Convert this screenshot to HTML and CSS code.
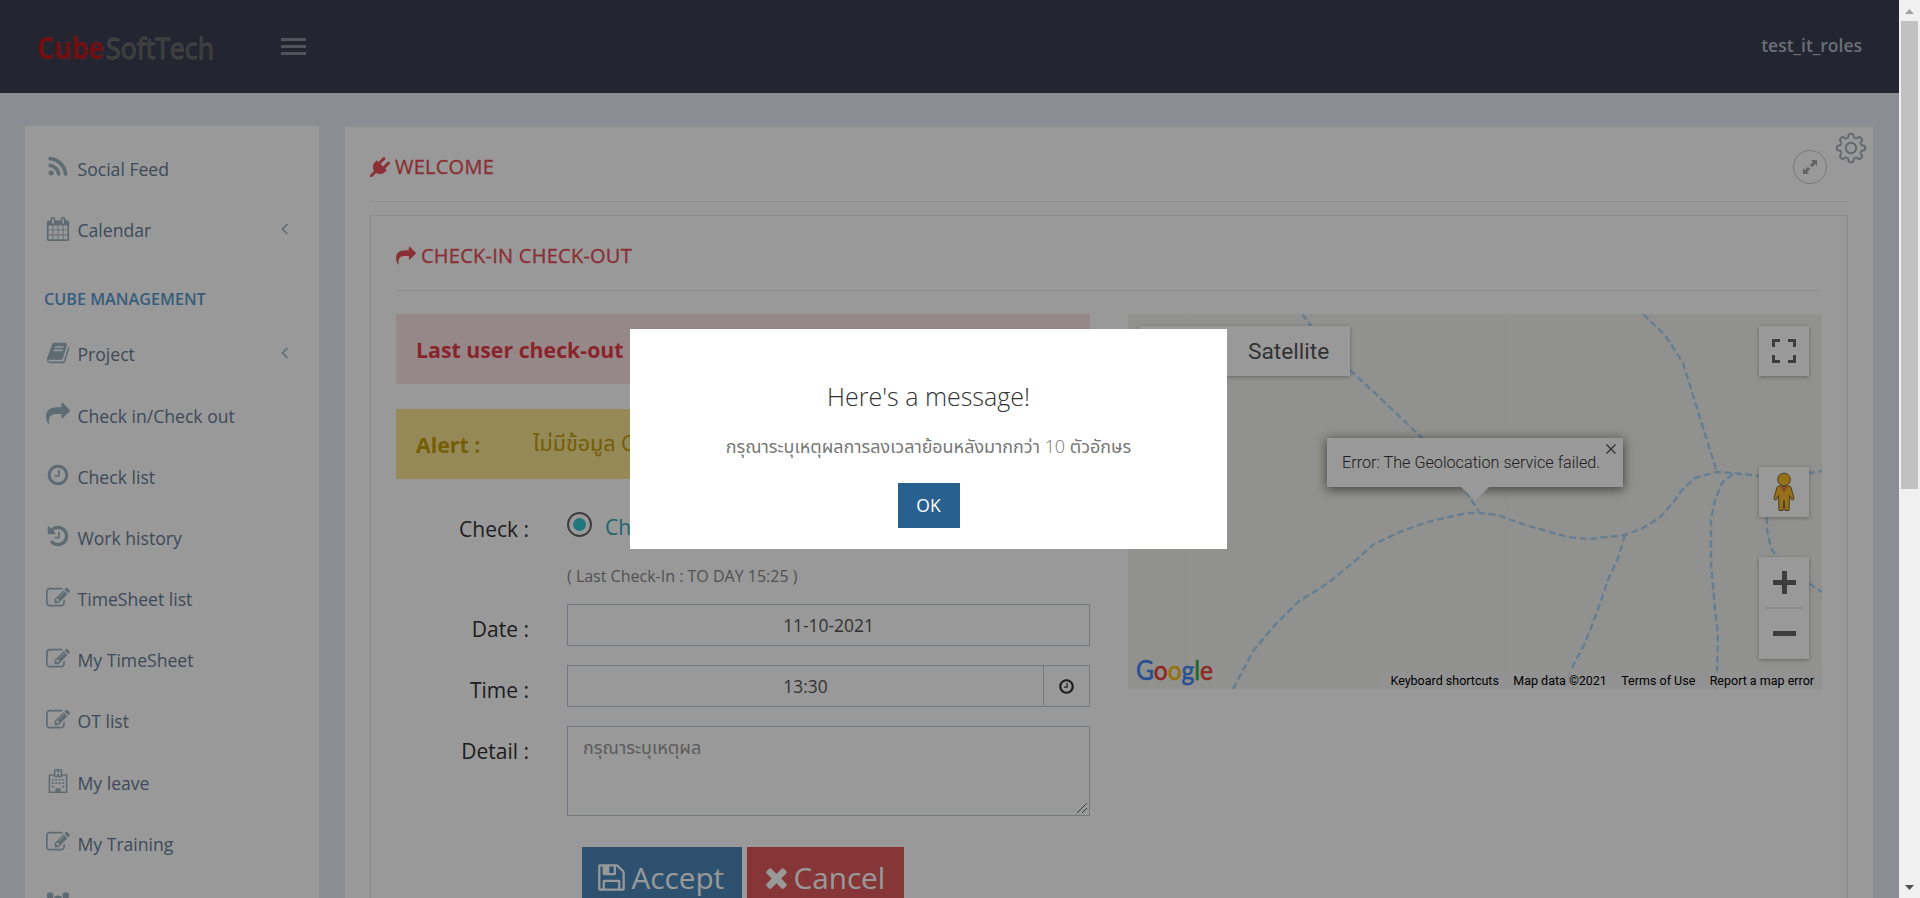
FILE: index.html
```html
<!DOCTYPE html>
<html lang="th">
<head>
<meta charset="utf-8">
<title>CubeSoftTech</title>
<link rel="stylesheet" href="styles.css">
</head>
<body>
<svg class="sprite" aria-hidden="true">
  <symbol id="rss" viewBox="0 0 1792 1792"><path d="M576 1344q0 80-56 136t-136 56-136-56-56-136 56-136 136-56 136 56 56 136zm512 123q2 28-17 48-18 21-47 21h-135q-25 0-43-16.500t-20-41.500q-22-229-184.500-391.500t-391.500-184.500q-25-2-41.500-20t-16.500-43v-135q0-29 21-47 17-17 43-17h5q160 13 306 80.500t259 181.500q114 113 181.500 259t80.500 306zm512 2q2 27-18 47-18 20-46 20h-143q-26 0-44.500-17.500t-19.500-42.500q-12-215-101-408.500t-231.500-336-336-231.500-408.500-102q-25-1-42.500-19.500t-17.500-43.500v-143q0-28 20-46 18-18 44-18h3q262 13 501.500 120t425.500 294q187 186 294 425.500t120 501.500z"/></symbol>
  <symbol id="calendar" viewBox="0 0 1792 1792"><path d="M192 1664h288v-288h-288v288zm352 0h320v-288h-320v288zm-352-352h288v-320h-288v320zm352 0h320v-320h-320v320zm-352-384h288v-288h-288v288zm736 736h320v-288h-320v288zm-384-736h320v-288h-320v288zm768 736h288v-288h-288v288zm-384-352h320v-320h-320v320zm-352-864v-288q0-13-9.500-22.500t-22.500-9.500h-64q-13 0-22.500 9.500t-9.500 22.500v288q0 13 9.500 22.500t22.500 9.500h64q13 0 22.500-9.500t9.500-22.500zm736 864h288v-320h-288v320zm-384-384h320v-288h-320v288zm384 0h288v-288h-288v288zm32-480v-288q0-13-9.500-22.500t-22.500-9.500h-64q-13 0-22.500 9.500t-9.500 22.500v288q0 13 9.500 22.500t22.500 9.500h64q13 0 22.500-9.500t9.500-22.500zm384-64v1280q0 52-38 90t-90 38h-1408q-52 0-90-38t-38-90v-1280q0-52 38-90t90-38h128v-96q0-66 47-113t113-47h64q66 0 113 47t47 113v96h384v-96q0-66 47-113t113-47h64q66 0 113 47t47 113v96h128q52 0 90 38t38 90z"/></symbol>
  <symbol id="book" viewBox="0 0 1792 1792"><path d="M1703 478q40 57 18 129l-275 906q-19 64-76.500 107.500t-122.500 43.500h-923q-77 0-148.500-53.500t-99.500-131.500q-24-67-2-127 0-4 3-27t4-37q1-8-3-21.500t-3-19.500q2-11 8-21t16.500-23.500 16.500-23.500q23-38 45-91.500t30-91.500q3-10 .5-30t-.5-28q3-11 17-28t17-23q21-36 42-92t25-90q1-9-2.500-32t.5-28q4-13 22-30.500t22-22.500q19-26 42.500-84.500t27.500-96.500q1-8-3-25.500t-2-26.500q2-8 9-18t18-23 17-21q8-12 16.500-30.500t15-35 16-36 19.500-32 26.500-23.500 36-11.500 47.500 5.500l-1 3q38-9 51-9h761q74 0 114 56t18 130l-274 906q-36 119-71.500 153.500t-128.500 34.500h-869q-27 0-38 15-11 16-1 43 24 70 144 70h923q29 0 56-15.500t35-41.500l300-987q7-22 5-57 38 15 59 43zm-1064 2q-4 13 2 22.500t20 9.500h608q13 0 25.500-9.500t16.500-22.500l21-64q4-13-2-22.500t-20-9.500h-608q-13 0-25.500 9.500t-16.500 22.500zm-83 256q-4 13 2 22.500t20 9.500h608q13 0 25.500-9.500t16.500-22.500l21-64q4-13-2-22.500t-20-9.500h-608q-13 0-25.500 9.500t-16.500 22.500z"/></symbol>
  <symbol id="share" viewBox="0 0 1792 1792"><path d="M1792 640q0 26-19 45l-512 512q-19 19-45 19t-45-19-19-45v-256h-224q-98 0-175.500 6t-154 21.500-133 42.500-105.500 69.500-80 101-48.500 138.500-17.500 181q0 55 5 123 0 6 2.500 23.500t2.500 26.500q0 15-8.500 25t-23.500 10q-16 0-28-17-7-9-13-22t-13.500-30-10.500-24q-127-285-127-451 0-199 53-333 162-403 875-403h224v-256q0-26 19-45t45-19 45 19l512 512q19 19 19 45z"/></symbol>
  <symbol id="clock" viewBox="0 0 1792 1792"><path d="M1024 544v448q0 14-9 23t-23 9h-320q-14 0-23-9t-9-23v-64q0-14 9-23t23-9h224v-352q0-14 9-23t23-9h64q14 0 23 9t9 23zm416 352q0-148-73-273t-198-198-273-73-273 73-198 198-73 273 73 273 198 198 273 73 273-73 198-198 73-273zm224 0q0 209-103 385.500t-279.500 279.500-385.500 103-385.500-103-279.500-279.500-103-385.500 103-385.500 279.500-279.500 385.500-103 385.500 103 279.500 279.500 103 385.500z"/></symbol>
  <symbol id="history" viewBox="0 0 1792 1792"><path d="M1664 896q0 156-61 298t-164 245-245 164-298 61q-172 0-327-72.500t-264-204.500q-7-10-6.500-22.500t8.500-20.500l137-138q10-9 25-9 16 2 23 12 73 95 179 147t225 52q104 0 198.500-40.500t163.500-109.500 109.500-163.500 40.500-198.500-40.500-198.500-109.500-163.500-163.500-109.500-198.500-40.500q-98 0-188 35.500t-160 101.500l137 138q31 30 14 69-17 40-59 40h-448q-26 0-45-19t-19-45v-448q0-42 40-59 39-17 69 14l130 129q107-101 244.500-156.500t284.500-55.500q156 0 298 61t245 164 164 245 61 298zm-640-288v448q0 14-9 23t-23 9h-320q-14 0-23-9t-9-23v-64q0-14 9-23t23-9h224v-352q0-14 9-23t23-9h64q14 0 23 9t9 23z"/></symbol>
  <symbol id="edit" viewBox="0 0 1792 1792"><path d="M888 1184l116-116-152-152-116 116v56h96v96h56zm440-720q-16-16-33 1l-350 350q-17 17-1 33t33-1l350-350q17-17 1-33zm80 594v190q0 119-84.500 203.500t-203.500 84.500h-832q-119 0-203.500-84.500t-84.500-203.500v-832q0-119 84.500-203.500t203.500-84.500h832q63 0 117 25 15 7 18 23 3 17-9 29l-49 49q-14 14-32 8-23-6-45-6h-832q-66 0-113 47t-47 113v832q0 66 47 113t113 47h832q66 0 113-47t47-113v-126q0-13 9-22l64-64q15-15 35-7t20 29zm-96-738l288 288-672 672h-288v-288zm444 132l-92 92-288-288 92-92q28-28 68-28t68 28l152 152q28 28 28 68t-28 68z"/></symbol>
  <symbol id="hospital" viewBox="0 0 23 23"><path fill-rule="evenodd" d="M2.500 5H7.500V1.500Q7.500 0 9 0H14Q15.500 0 15.500 1.500V5H20.500V23H2.500ZM4 6.500V21.500H9V18.500H14V21.500H19V6.500H15.500V8H7.500V6.500ZM9 1.500V6.500H10.500V4.800H12.500V6.500H14V1.500H12.500V3.300H10.500V1.500Z"/><path d="M5.500 9.500h2v1.600h-2zm3.300 0h2v1.600h-2zm3.300 0h2v1.600h-2zm3.400 0h2v1.600h-2zM5.500 12.800h2v1.600h-2zm3.300 0h2v1.600h-2zm3.300 0h2v1.600h-2zm3.400 0h2v1.600h-2zM5.500 16.100h2v1.600h-2zm10 0h2v1.600h-2z"/></symbol>
  <symbol id="group" viewBox="0 0 23 23"><circle cx="4" cy="3.500" r="3.200"/><circle cx="19" cy="3.500" r="3.200"/><circle cx="11.500" cy="8" r="4.600"/><path d="M0 12q0-5 3-5 2 1.500 4 1-1 3 0 5H1zM23 12q0-5-3-5-2 1.500-4 1 1 3 0 5h6z"/></symbol>
  <symbol id="plug" viewBox="0 0 1792 1792"><path d="M1755 453q37 38 37 90.500t-37 90.500l-401 400 150 150-160 160q-163 163-389.500 186.500t-411.500-100.500l-362 362h-181v-181l362-362q-124-185-100.500-411.500t186.500-389.500l160-160 150 150 400-401q38-37 91-37t90 37 37 90.500-37 90.500l-400 401 234 234 401-400q38-37 91-37t90 37z"/></symbol>
  <symbol id="floppy" viewBox="0 0 1792 1792"><path d="M512 1536h768v-384h-768v384zm896 0h128v-896q0-14-10-38.500t-20-34.500l-281-281q-10-10-34-20t-39-10v416q0 40-28 68t-68 28h-576q-40 0-68-28t-28-68v-416h-128v1280h128v-416q0-40 28-68t68-28h832q40 0 68 28t28 68v416zm-384-928v-320q0-13-9.500-22.500t-22.500-9.500h-192q-13 0-22.500 9.500t-9.500 22.500v320q0 13 9.500 22.500t22.500 9.500h192q13 0 22.500-9.500t9.500-22.500zm640 32v928q0 40-28 68t-68 28h-1344q-40 0-68-28t-28-68v-1344q0-40 28-68t68-28h928q40 0 88 20t76 48l280 280q28 28 48 76t20 88z"/></symbol>
  <symbol id="times" viewBox="0 0 1792 1792"><path d="M1490 1322q0 40-28 68l-136 136q-28 28-68 28t-68-28l-294-294-294 294q-28 28-68 28t-68-28l-136-136q-28-28-28-68t28-68l294-294-294-294q-28-28-28-68t28-68l136-136q28-28 68-28t68 28l294 294 294-294q28-28 68-28t68 28l136 136q28 28 28 68t-28 68l-294 294 294 294q28 28 28 68z"/></symbol>
</svg>

<div class="screen">
  <div class="page">
    <header class="header">
      <svg class="logo" width="180" height="50"><text class="logo-cube" x="0" y="37" textLength="67" lengthAdjust="spacingAndGlyphs">Cube</text><text class="logo-soft" x="69" y="37" textLength="108" lengthAdjust="spacingAndGlyphs">SoftTech</text></svg>
      <div class="burger"><i></i><i></i><i></i></div>
      <span class="user">test_it_roles</span>
    </header>
    <div class="columns">
      <nav class="sidebar">
        <a class="item"><svg class="ico"><use href="#rss"/></svg>Social Feed</a>
        <a class="item"><svg class="ico"><use href="#calendar"/></svg>Calendar<svg class="angle" viewBox="0 0 8 12"><path d="M6.500 1L1.500 6L6.500 11"/></svg></a>
        <h3 class="heading">CUBE MANAGEMENT</h3>
        <a class="item"><svg class="ico"><use href="#book"/></svg>Project<svg class="angle" viewBox="0 0 8 12"><path d="M6.500 1L1.500 6L6.500 11"/></svg></a>
        <a class="item"><svg class="ico"><use href="#share"/></svg>Check in/Check out</a>
        <a class="item"><svg class="ico"><use href="#clock"/></svg>Check list</a>
        <a class="item"><svg class="ico"><use href="#history"/></svg>Work history</a>
        <a class="item"><svg class="ico"><use href="#edit"/></svg>TimeSheet list</a>
        <a class="item"><svg class="ico"><use href="#edit"/></svg>My TimeSheet</a>
        <a class="item"><svg class="ico"><use href="#edit"/></svg>OT list</a>
        <a class="item"><svg class="ico"><use href="#hospital"/></svg>My leave</a>
        <a class="item"><svg class="ico"><use href="#edit"/></svg>My Training</a>
        <a class="item"><svg class="ico"><use href="#group"/></svg></a>
      </nav>
      <main class="portlet">
        <div class="title">
          <svg class="tico"><use href="#plug"/></svg><span>WELCOME</span>
          <div class="expand"><svg width="16" height="16" viewBox="0 0 16 16"><path d="M9 1H15V7L13.100 5.100L10 8.200L7.800 6L10.900 2.900ZM7 15H1V9L2.900 10.900L6 7.800L8.200 10L5.100 13.100Z"/></svg></div>
          <svg class="gear" width="32" height="32" viewBox="-16 -16 32 32">
            <g id="half"><path d="M-4.100-9.900Q-2.600-10.300-2.600-12Q-2.600-14.200 0-14.200Q2.600-14.200 2.600-12Q2.600-10.300 4.100-9.900"/><path transform="rotate(45)" d="M-4.100-9.900Q-2.600-10.300-2.600-12Q-2.600-14.200 0-14.200Q2.600-14.200 2.600-12Q2.600-10.300 4.100-9.900"/></g>
            <use href="#half" transform="rotate(90)"/><use href="#half" transform="rotate(180)"/><use href="#half" transform="rotate(270)"/>
            <circle r="5.200"/>
          </svg>
        </div>
        <section class="panel">
          <div class="title inner"><svg class="tico"><use href="#share"/></svg><span>CHECK-IN CHECK-OUT</span></div>
          <div class="split">
            <div class="form">
              <div class="note danger"><b>Last user check-out :</b></div>
              <div class="note warn"><b>Alert :</b><span>ไม่มีข้อมูล Check-in</span></div>
              <div class="row check"><label>Check :</label><div class="radio"><i></i><span>Check-in</span></div></div>
              <p class="last">( Last Check-In : TO DAY 15:25 )</p>
              <div class="row"><label>Date :</label><div class="input">11-10-2021</div></div>
              <div class="row"><label>Time :</label><div class="input time"><span>13:30</span><i><svg width="17" height="17"><use href="#clock"/></svg></i></div></div>
              <div class="row"><label>Detail :</label><div class="input area">กรุณาระบุเหตุผล<svg class="grip" width="12" height="12"><path d="M1 11L11 1M6 11L11 6"/></svg></div></div>
              <div class="buttons"><a class="accept"><svg><use href="#floppy"/></svg>Accept</a><a class="cancel"><svg><use href="#times"/></svg>Cancel</a></div>
            </div>
            <div class="map">
              <svg class="rivers" width="694" height="375">
                <path class="tile" d="M58.500 0V375M378.500 0V375"/>
                <path d="M174 0L184 13L223 57L249 81L294 124L337 176L351 198"/>
                <path d="M105 375L125 337L145 313L170 288L200 269L227 247L246 230L272 218L299 208L339 199L351 199L370 201L397 211L440 223L460 225L497 221L515 214L531 204L545 189L554 176L567 164L589 158L605 159L631 162L682 159L694 157"/>
                <path d="M515 0L537 21L555 49L572 104L589 158"/>
                <path d="M605 160L594 169L587 186L583 206L583 249L588 306L590 319L589 356L587 375"/>
                <path d="M497 221L490 244L480 266L469 298L457 329L443 356L435 375"/>
                <path d="M639 203L639 216L643 234L649 243L682 270L694 278"/>
              </svg>
              <div class="types"><span>Map</span><span>Satellite</span></div>
              <div class="ctl full"><svg width="24" height="24"><path d="M1.500 8V1.500H8M16 1.500H22.500V8M22.500 16V22.500H16M8 22.500H1.500V16"/></svg></div>
              <div class="ctl peg"><svg width="24" height="40" viewBox="0 0 24 40"><path class="man" d="M7 14H17Q18.500 14 19 15.500L22 26Q22 28 20 28L17.500 23.500L17 38.500H13L12 28L11 38.500H7L6.500 23.500L4 28Q1.500 28 2 26L5 15.500Q5.500 14 7 14Z"/><path class="scarf" d="M8 14H16L12 21Z"/><circle class="man" cx="12" cy="7.500" r="6.300"/></svg></div>
              <div class="ctl zoom"><svg width="50" height="102"><path class="bars" d="M14 25.500H37M25.500 14V37M14 76.500H37"/><path class="sep" d="M6 51H44"/></svg></div>
              <div class="info">Error: The Geolocation service failed.<svg class="close" width="10" height="10"><path d="M.5 .5L9.500 9.500M9.500 .5L.5 9.500"/></svg></div>
              <svg class="google" width="84" height="40"><text x="2" y="28" textLength="77" lengthAdjust="spacingAndGlyphs"><tspan fill="#4285f4">G</tspan><tspan fill="#ea4335">o</tspan><tspan fill="#fbbc05">o</tspan><tspan fill="#4285f4">g</tspan><tspan fill="#34a853">l</tspan><tspan fill="#ea4335">e</tspan></text></svg>
              <div class="credits"><span>Keyboard shortcuts</span><span>Map data ©2021</span><span>Terms of Use</span><span>Report a map error</span></div>
            </div>
          </div>
        </section>
      </main>
    </div>
    <div class="overlay">
      <div class="modal">
        <h2>Here's a message!</h2>
        <p>กรุณาระบุเหตุผลการลงเวลาย้อนหลังมากกว่า <span>10</span> ตัวอักษร</p>
        <a>OK</a>
      </div>
    </div>
  </div>
  <div class="scrollbar">
    <svg width="21" height="21"><path fill="#a3a3a3" d="M6 14L10.500 9L15 14Z"/></svg>
    <div class="thumb"></div>
    <svg class="down" width="21" height="21"><path fill="#505050" d="M6 8L10.500 13L15 8Z"/></svg>
  </div>
</div>
</body>
</html>
```

FILE: styles.css
```css
* { box-sizing: border-box; }
body { margin: 0; overflow: hidden; font-family: "Open Sans", "Noto Sans Thai", sans-serif; }
h2, h3, p { margin: 0; font-weight: inherit; }
.sprite { display: none; }
.screen { display: grid; grid-template-columns: 1fr 21px; height: 898px; }
.page { position: relative; height: 898px; overflow: hidden; background: #e9ecf3; }

.header { display: flex; align-items: center; height: 93px; padding: 0 37px 0 37px; background: #3b3f51; }
.logo { overflow: visible; font-size: 30px; stroke-width: .8px; }
.logo-cube { font-weight: 700; fill: #c4141b; stroke: #7d3a42; }
.logo-soft { fill: #5c5c5c; stroke: #7c7c80; }
.burger { display: grid; gap: 4px; margin: 0 0 0 64px; }
.burger i { width: 25px; height: 3px; background: #878a96; }
.user { margin: -3px 0 0 auto; font-size: 17.500px; font-weight: 600; color: #b3b6c8; }

.columns { display: flex; gap: 26px; padding: 33px 26px 0 25px; }
.sidebar { flex: none; width: 294px; height: 1000px; padding: 12.400px 30px 0 21px; background: #fff; }
.item { display: flex; align-items: center; height: 61.200px; font-size: 17.600px; color: #687c94; }
.ico { width: 24px; height: 24px; margin: -3px 7.500px 0 0; fill: #9fb3c0; }
.angle { width: 8px; height: 12px; margin: -2px 0 0 auto; fill: none; stroke: #9fb3c0; stroke-width: 1.700; }
.heading { height: 63px; padding: 25px 0 0; font-size: 16.200px; font-weight: 600; line-height: 26px; margin-left: -2px; color: #5c9bd1; }

.portlet { flex: 1; height: 1000px; margin-top: 1px; padding: 0 25px; background: #fff; }
.title { position: relative; display: flex; align-items: center; height: 75px; padding-bottom: 0; margin-bottom: 13px; padding-top: 5px; border-bottom: 1px solid #eef1f5; font-size: 20px; color: #e7505a; }
.title span { margin-top: -1px; letter-spacing: .25px; -webkit-text-stroke: .35px #e7505a; }
.tico { width: 20px; height: 20px; margin-right: 5px; fill: #e7505a; }
.expand { display: flex; align-items: center; justify-content: center; width: 34px; height: 34px; margin: 0 21px 0 auto; border: 1px solid #c8c8c8; border-radius: 50%; }
.expand svg { fill: #a6a6a6; }
.gear { position: absolute; right: -19px; top: 5px; fill: none; stroke: #a9aeb5; stroke-width: 2; }
.panel { height: 1000px; padding: 0 25px; border: 1px solid #e7ecf1; }
.inner { margin-bottom: 23px; }

.split { display: flex; justify-content: space-between; }
.form { width: 694px; }
.note { display: flex; align-items: center; height: 70px; margin-bottom: 25px; padding-left: 20px; font-size: 21.500px; }
.note b { width: 117px; font-size: 21.300px; white-space: nowrap; }
.danger { background: #fbe1e3; color: #e73d4a; }
.warn { background: #f9e491; color: #c29d0b; }
.row { display: flex; justify-content: space-between; margin-bottom: 19px; }
.row label { width: 133px; padding-top: 11px; font-size: 21px; line-height: 29px; text-align: right; color: #333; }
.row .radio { display: flex; width: 523px; padding-top: 7px; font-size: 21px; line-height: 33px; color: #36a9b8; }
.check { height: 45px; margin: 0; }
.radio i { width: 25px; height: 25px; margin: 1px 13px 0 0; border: 2px solid #666; border-radius: 50%; padding: 4px; background: #36c6d3; background-clip: content-box; }
.last { height: 55px; padding: 15px 0 0 171px; font-size: 16px; line-height: 24px; color: #888; }
.input { width: 523px; height: 42px; border: 1px solid #c2cad8; font-size: 17.400px; line-height: 41px; text-align: center; color: #555; }
.time { display: flex; }
.time span { flex: 1; }
.time i { display: flex; align-items: center; justify-content: center; width: 46px; border-left: 1px solid #ccc; fill: #333; }
.area { position: relative; height: 90px; padding: 7px 15px; font-size: 18px; line-height: 26px; text-align: left; color: #999; }
.grip { position: absolute; right: 1px; bottom: 1px; stroke: #666; }
.buttons { display: flex; gap: 5px; margin: 31px 0 0 186px; }
.buttons a { display: flex; align-items: center; height: 64px; padding: 0 0 4px 13.500px; font-size: 29.700px; color: #fff; }
.buttons svg { width: 31px; height: 31px; margin-right: 5px; fill: #fff; }
.accept { width: 160px; background: #4c87b9; }
.cancel { width: 157px; background: #e15b5c; }
.buttons .cancel svg { margin-right: 2px; }

.map { position: relative; width: 694px; height: 375px; overflow: hidden; background: #f2f2ee; font-family: Roboto, sans-serif; }
.rivers { display: block; fill: none; stroke: #a9d0f2; stroke-width: 2.300; stroke-dasharray: 7 3.500; }
.rivers .tile { stroke: #edede9; stroke-width: 1; stroke-dasharray: none; }
.types, .ctl, .info { position: absolute; background: #fff; box-shadow: 0 1px 4px rgba(0, 0, 0, .3); }
.types { left: 12px; top: 12px; display: flex; height: 50px; line-height: 51px; font-size: 22.700px; color: #565656; }
.types span { padding: 0 21px; }
.types span:first-child { width: 87px; color: #000; }
.types span:last-child { width: 123px; }
.ctl { display: flex; align-items: center; justify-content: center; right: 13px; width: 50px; height: 50px; fill: none; stroke: #666; stroke-width: 3; }
.full { top: 12px; }
.peg { top: 153px; }
.zoom { top: 243px; height: 102px; }
.bars { stroke-width: 5; }
.sep { stroke: #e6e6e6; stroke-width: 1.500; }
.man { fill: #fbbc2a; stroke: #7a6430; stroke-width: 1; }
.scarf { fill: #e5794a; stroke: none; }
.info { left: 199px; top: 124px; width: 296px; height: 49px; padding-left: 15px; font-size: 16.200px; font-weight: 300; line-height: 49px; color: #333; box-shadow: 0 2px 10px 1px rgba(0, 0, 0, .5); }
.info::after { content: ""; position: absolute; left: 134px; top: 49px; border: 14px solid transparent; border-top-color: #fff; border-bottom: 0; }
.close { position: absolute; right: 7px; top: 6px; stroke: #555; stroke-width: 1.400; }
.google { position: absolute; left: 6px; bottom: -3px; overflow: visible; font-family: Lato, sans-serif; font-size: 27px; }
.google tspan { paint-order: stroke; }
.google tspan:nth-child(3n+1) { stroke: #4285f4; stroke-width: .6px; }
.google tspan:nth-child(2), .google tspan:nth-child(6) { stroke: #ea4335; stroke-width: .6px; }
.google tspan:nth-child(3) { stroke: #fbbc05; stroke-width: .6px; }
.google tspan:nth-child(5) { stroke: #34a853; stroke-width: .6px; }
.credits { position: absolute; right: 0; bottom: 0; display: flex; gap: 14.400px; height: 18px; padding: 0 8px; background: rgba(245, 245, 245, .7); font-size: 12.500px; line-height: 20px; color: #000; white-space: nowrap; }

.overlay { position: absolute; inset: 0; display: flex; justify-content: center; padding: 329px 42px 0 0; background: rgba(0, 0, 0, .4); }
.modal { display: flex; flex-direction: column; align-items: center; width: 597px; height: 220px; padding-top: 47px; background: #fff; }
.modal h2 { font-size: 25px; font-weight: 300; line-height: 40px; color: #333; }
.modal p { margin-top: 17px; font-size: 17.950px; line-height: 26px; color: #777; white-space: nowrap; }
.modal p span { font-weight: 300; }
.modal a { width: 62px; height: 45px; margin-top: 24px; background: #286090; font-size: 17.500px; line-height: 44px; text-align: center; color: #fff; }

.scrollbar { display: flex; flex-direction: column; height: 898px; background: #f0f0f0; }
.thumb { width: 17px; height: 468px; margin-left: 2px; background: #c1c1c1; }
.down { margin-top: auto; }
```
